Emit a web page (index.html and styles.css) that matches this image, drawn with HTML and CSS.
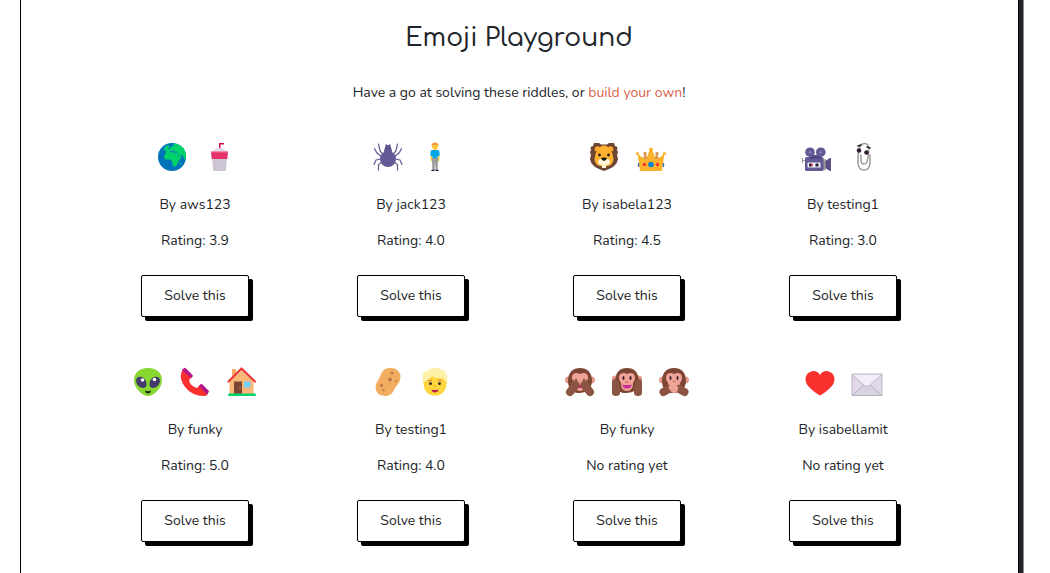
FILE: index.html
```html
<!DOCTYPE html>
<html lang="en">
<head>
<meta charset="utf-8">
<meta name="viewport" content="width=device-width, initial-scale=1">
<title>Emoji Playground</title>
<link rel="stylesheet" href="styles.css">
</head>
<body>
<main class="panel">
  <h1 class="title">Emoji Playground</h1>
  <p class="intro">Have a go at solving these riddles, or <a class="link" href="#build">build your own</a>!</p>
  <section class="grid">
    <article class="riddle">
      <div class="emojis">
        <svg class="emoji" viewBox="0 0 32 32" role="img" aria-label="Globe"><circle cx="16" cy="16" r="14" fill="#0074ba"/><path d="M8 8 10 5l2.500-1 1 1.500L12 7.500l2 .5 1-2.500 3-.5-1-2 2-.5 4.500 1.500L28 7.500l2 5v4.500l-1.500 2-1-3-1.500-2h-1.500l1 2.500-1.500 2-1 .5-1 3-2 3-1.500 1-1.500-1.500-1-3.500-.5-1.500-2-1H10l-2-1.500v-2l2-2.500-.5-1.500 1.500-1-1.500-.5L8 9.500z" fill="#00d26a"/><path d="M13 11.500q2-1 4 .3l4.500.2-.5-1.200-2.500-.3-1-1.300-1.500.5-1-.5zM21 13l2 3 .6-.3-1.600-3z" fill="#0d8fb5"/><path d="m24 21.400 1-.6-.4 2.600-.9.5z" fill="#00d26a"/></svg>
        <svg class="emoji" viewBox="0 0 32 32" role="img" aria-label="Cup with straw"><path d="M16 9V2h5v1.500h-3.500V9z" fill="#ca0b4a"/><path d="M12 8.500Q12 7 13.500 7h6Q21 7 21 8.500L24 10v1H9v-1z" fill="#e1d8ec"/><path d="m9 15 1 14q.1 1 1 1h11q.9 0 1-1l1-14z" fill="#cdc4d6"/><path d="M8 10.800h17l-.7 7.200H8.700z" fill="#e63169"/><path d="M8 10h17v1.300H8z" fill="#f38daa"/></svg>
      </div>
      <p class="meta">By aws123</p><p class="meta">Rating: 3.9</p><button class="solve" type="button">Solve this</button>
    </article>
    <article class="riddle">
      <div class="emojis">
        <svg class="emoji" viewBox="0 0 32 32" role="img" aria-label="Spider"><g fill="none" stroke="#635994" stroke-width="1.200" stroke-linecap="round"><path d="M11 13 8 10 6.500 3M9 15l-4-3-2.500-4.500M9 18l-5 1-2 4.500M10 21l-3.500 2.500L6.500 29M21 13l3-3 1.500-7M23 15l4-3 2.500-4.500M23 18l5 1 2 4.500M22 21l3.500 2.500L25.500 29"/></g><path d="M13 10 13.500 4q.8-2 1.300 0h2.400q.5-2 1.300 0l.5 6z" fill="#635994"/><ellipse cx="16" cy="10" rx="4" ry="4.500" fill="#635994"/><circle cx="16" cy="18" r="8" fill="#635994"/><path d="M14.200 5.500v2M17.800 5.500v2" stroke="#433b6b" stroke-width="1"/></svg>
        <svg class="emoji" viewBox="0 0 32 32" role="img" aria-label="Person standing"><path d="M11.700 13v6.500q1.300 1.500 2 0V13zM18.300 13v6.500q1.300 1.500 2 0V13zM14.500 7h3v3h-3z" fill="#f9c23c"/><circle cx="16" cy="5.500" r="3" fill="#ffc83d"/><path d="M12.600 5q-.3-3.500 3.400-3.500T19.400 5q-1.400-1.500-3.400-1t-3.400 1" fill="#f19a3e"/><path d="M11.500 11q0-2 2-2h5q2 0 2 2v4h-2v3h-5v-3h-2z" fill="#00a6ed"/><path d="M13 17h6l-.3 12h-2.200L16 20l-.5 9h-2.200z" fill="#9b9b9b"/><path d="M12 30q.2-1.500 3.500-1.500V30zM20 30q-.2-1.500-3.500-1.500V30z" fill="#321b41"/></svg>
      </div>
      <p class="meta">By jack123</p><p class="meta">Rating: 4.0</p><button class="solve" type="button">Solve this</button>
    </article>
    <article class="riddle">
      <div class="emojis">
        <svg class="emoji" viewBox="0 0 32 32" role="img" aria-label="Lion"><path d="M6 2h5l2 1.500h6L21 2h5l1 3 2.500 1-.5 3 1 2-1 3 1 4-1.500 4.500L25 26l-4 2-5 2-5-2-4-2-3.500-3.500L2 18l1-4-1-3 1-2-.5-3L5 5z" fill="#6d4534"/><circle cx="9.500" cy="8" r="2.800" fill="#f9aa29"/><circle cx="22.500" cy="8" r="2.800" fill="#f9aa29"/><path d="M16 4.500q4 0 6.500 4.500 3 4 3 9 0 7.500-9.500 7.500T6.500 18q0-5 3-9Q12 4.500 16 4.500" fill="#ffb02e"/><ellipse cx="13.500" cy="21" rx="3.500" ry="3" fill="#fff3d8"/><ellipse cx="18.500" cy="21" rx="3.500" ry="3" fill="#fff3d8"/><path d="M14 23h4v4h-4z" fill="#fff3d8"/><circle cx="11.500" cy="14" r="1.400" fill="#212121"/><circle cx="20.500" cy="14" r="1.400" fill="#212121"/><path d="M13 17q3-1.200 6 0-1 2.500-3 3-2-.5-3-3" fill="#111"/></svg>
        <svg class="emoji" viewBox="0 0 32 32" role="img" aria-label="Crown"><path d="m2.500 12 4 4 3 1 3-2 2.500-7h2l2.500 7 3 2 3-1 4-4-2.500 18H5z" fill="#fcb22b"/><g fill="#d99658"><circle cx="10" cy="12.500" r="1.700"/><circle cx="22" cy="12.500" r="1.700"/><path d="M9.300 13h1.500l1.700 5h-4zM21.200 13h1.500l.8 5h-4z"/></g><circle cx="2.500" cy="12.500" r="1.500" fill="#ffb02e"/><circle cx="29.500" cy="12.500" r="1.500" fill="#ffb02e"/><circle cx="16" cy="8.500" r="2" fill="#ffb02e"/><path d="M3.700 22v4q-1.200-2 0-4M28.300 22v4q1.200-2 0-4" stroke="#26a" stroke-width=".8" fill="#00a6ed"/><circle cx="16" cy="23.500" r="2.800" fill="#0084ce"/><circle cx="9.500" cy="23.500" r="1.700" fill="#f8312f"/><circle cx="22.500" cy="23.500" r="1.700" fill="#f8312f"/></svg>
      </div>
      <p class="meta">By isabela123</p><p class="meta">Rating: 4.5</p><button class="solve" type="button">Solve this</button>
    </article>
    <article class="riddle">
      <div class="emojis emojis-trailing">
        <svg class="emoji" viewBox="0 0 32 32" role="img" aria-label="Movie camera"><path d="M1.500 17v5M2 19.500h3" stroke="#9b9b9b" stroke-width="1.200"/><path d="M24 20 29 17h1v13h-1l-5-3z" fill="#5b4d85"/><path d="M21.500 18h3v11h-3z" fill="#9b9b9b"/><rect x="4" y="16" width="18.500" height="14" rx="1.500" fill="#635994"/><path d="m9 13 5 1 6-1v5H9z" fill="#534783"/><circle cx="9" cy="11.200" r="4.800" fill="#635994"/><circle cx="19.800" cy="11.200" r="4.800" fill="#635994"/><circle cx="9" cy="11.200" r="1" fill="#a59bc5"/><circle cx="19.800" cy="11.200" r="1" fill="#a59bc5"/><rect x="6.500" y="21.500" width="13" height="5" rx=".5" fill="#f4f4f4"/><path d="M8 22.500h3v3H8z" fill="#321b41"/><circle cx="11" cy="24" r="1" fill="#f8312f"/><path d="M14.500 22.500h3v3h-3z" fill="#321b41"/></svg>
        <svg class="emoji" viewBox="0 0 32 32" role="img" aria-label="Paperclip with eyes"><path d="M20 4Q18 1.500 14.500 3 12 4 11 8l-1 8v6q.5 7 6 7t6-7v-8M20 4q1.500 3 .5 8l-1 7q-.5 4-3.500 4t-3-4v-5" fill="none" stroke="#9b9b9b" stroke-width="1.500" stroke-linecap="round"/><circle cx="11" cy="9.500" r="2.300" fill="#321b31"/><circle cx="18.500" cy="11.500" r="2.300" fill="#321b31"/><path d="m10 5 3-1M19 6l3 1" stroke="#212121" stroke-width="1.500" stroke-linecap="round"/></svg>
      </div>
      <p class="meta">By testing1</p><p class="meta">Rating: 3.0</p><button class="solve" type="button">Solve this</button>
    </article>
    <article class="riddle">
      <div class="emojis">
        <svg class="emoji" viewBox="0 0 32 32" role="img" aria-label="Alien"><path d="M16 2c9 0 14 5.500 14 12 0 8-8 16-14 16S2 22 2 14C2 7.500 7 2 16 2" fill="#86d72f"/><path d="M6 11q5-1.500 8 4 2 7-3 7Q5 21 4 15q0-3 2-4M26 11q-5-1.500-8 4-2 7 3 7 6-1 7-7 0-3-2-4" fill="#433b6b"/><circle cx="10.500" cy="14" r="1.800" fill="#fff"/><circle cx="22.500" cy="13.500" r="1.800" fill="#fff"/><path d="M13 24.500q3 1.300 6 0-.5 3-3 3t-3-3" fill="#212121"/></svg>
        <svg class="emoji" viewBox="0 0 32 32" role="img" aria-label="Telephone receiver"><path d="m4 3 9 8-3 3q1 6 8 8l3-3 8 9q-1 2-4 2Q13 30 6 21 0 13 2.500 6z" fill="#f8312f"/><path d="m3 4 2-2q1-.5 2 .5L13.500 9q.8.800 0 1.800L12 12zM20 20l1.500-1.700q1-.8 2 .2l6 6q1 1 0 2L28 28.500z" fill="#b4168a"/></svg>
        <svg class="emoji" viewBox="0 0 32 32" role="img" aria-label="House"><path d="M3.500 15 16 4l11.500 11v13h-24z" fill="#f9b778"/><path d="M6 3h4v4L6 11z" fill="#f9aa64"/><path d="m2.500 15.500 13-13 13.500 13" fill="none" stroke="#e8383b" stroke-width="2.200" stroke-linecap="round" stroke-linejoin="round"/><path d="M8 15.500h8V28H8z" fill="#7d4533"/><circle cx="14" cy="22" r=".8" fill="#d3883e"/><rect x="18" y="15.500" width="6.500" height="6" rx=".5" fill="#77cfff"/><rect x="2" y="27.500" width="28" height="2.500" rx="1.200" fill="#00d26a"/></svg>
      </div>
      <p class="meta">By funky</p><p class="meta">Rating: 5.0</p><button class="solve" type="button">Solve this</button>
    </article>
    <article class="riddle">
      <div class="emojis">
        <svg class="emoji" viewBox="0 0 32 32" role="img" aria-label="Potato"><path d="M18 2q8-.5 10.500 7 .5 6-4 11-2 2-3 5-2.500 5-8.500 5Q4 29.500 3.500 21.500q0-4 3-8Q8 11 9.500 7 12 2 18 2" fill="#f3ad61"/><g fill="#bd7945"><circle cx="20" cy="7" r="1.500"/><circle cx="18" cy="13.500" r="1.900"/><circle cx="24" cy="15" r="1.100"/><circle cx="9.500" cy="19.500" r="1.700"/><circle cx="11.500" cy="24" r="1.200"/></g></svg>
        <svg class="emoji" viewBox="0 0 32 32" role="img" aria-label="Person with blond hair"><ellipse cx="16" cy="17" rx="12" ry="3" fill="#ffc928"/><circle cx="16" cy="18.500" r="11.300" fill="#ffd53e"/><path d="M4 16Q3 12 4 9 4 5 8 5.500 11 1.500 16 2q5 0 7 2 4 0 4 4 2 3 1 8h-1q-2-3-5-4-7 0-9-2-4 5-9 6" fill="#fff0a8"/><path d="M9 15q2-1.200 4-.3M19 14.700q2-.9 4 .3" fill="none" stroke="#d67d53" stroke-width="1"/><circle cx="11.500" cy="17.500" r="1.500" fill="#402a32"/><circle cx="20.500" cy="17.500" r="1.500" fill="#402a32"/><path d="M15 20h2" stroke="#e29b25" stroke-width="1.200"/><path d="M12.500 23.500q3.500 1 7 0-.5 3-3.500 3t-3.500-3" fill="#bb1d50"/></svg>
      </div>
      <p class="meta">By testing1</p><p class="meta">Rating: 4.0</p><button class="solve" type="button">Solve this</button>
    </article>
    <article class="riddle">
      <div class="emojis">
        <svg class="emoji" viewBox="0 0 32 32" role="img" aria-label="See-no-evil monkey"><circle cx="4.500" cy="14" r="3.500" fill="#e59a8c"/><circle cx="27.500" cy="14" r="3.500" fill="#e59a8c"/><path d="M16 2q11 0 12 12 0 12-12 13T4 14Q5 2 16 2" fill="#7d4533"/><path d="M16 8q5-2.500 7.500 1 2 4-1.500 8-1 8-6 8t-6-8q-3.500-4-1.500-8Q11 5.500 16 8" fill="#f0a499"/><path d="M14 19h4l1.500 3h-7z" fill="#ca2c78"/><path d="m6 26 5.500-7M26 26l-5.500-7" stroke="#8c5543" stroke-width="8" stroke-linecap="round"/><path d="m8.500 14.500 2 5M12 14v6M23.500 14.500l-2 5M20 14v6" stroke="#8c5543" stroke-width="2.500" stroke-linecap="round"/></svg>
        <svg class="emoji" viewBox="0 0 32 32" role="img" aria-label="Hear-no-evil monkey"><path d="M1 11q1-1.500 4-1.500v8H1zM31 11q-1-1.500-4-1.500v8h4z" fill="#e9998b"/><path d="M16 2q11 0 12 13 0 11-12 12T4 15Q5 2 16 2" fill="#7d4533"/><path d="M16 8q5-2.500 7.500 1 1.500 4-1.500 8 0 8-6 8t-6-8q-3-4-1.500-8Q11 5.500 16 8" fill="#f0a499"/><ellipse cx="12.500" cy="12" rx="1" ry="2" fill="#321b28"/><ellipse cx="19.500" cy="12" rx="1" ry="2" fill="#321b28"/><path d="M14 15.500h4V17h-4z" fill="#d6726f"/><path d="M11.500 18.500q4.500 1 9 0 0 4-4.500 4t-4.500-4" fill="#ca2c98"/><path d="M1 16q0-3 3-3 2 0 3.500 3L9 22v5q0 3-4 3t-4-3zM31 16q0-3-3-3-2 0-3.500 3L23 22v5q0 3 4 3t4-3z" fill="#8c5543"/></svg>
        <svg class="emoji" viewBox="0 0 32 32" role="img" aria-label="Speak-no-evil monkey"><circle cx="4.500" cy="14" r="3.500" fill="#e59a8c"/><circle cx="27.500" cy="14" r="3.500" fill="#e59a8c"/><path d="M16 2q11 0 12 12 0 12-12 13T4 14Q5 2 16 2" fill="#7d4533"/><path d="M16 8q5-2.500 7.500 1 1.500 4-1.500 8 0 6-6 6t-6-6q-3-4-1.500-8Q11 5.500 16 8" fill="#f0a499"/><ellipse cx="12.500" cy="12" rx="1" ry="2" fill="#321b28"/><ellipse cx="19.500" cy="12" rx="1" ry="2" fill="#321b28"/><path d="M14.500 15.500h3" stroke="#c76f67"/><path d="m5.500 26 5.500-3M26.500 26 21 23" stroke="#8c5543" stroke-width="8" stroke-linecap="round"/><path d="m12 18 3 1 3-2 1 1-.5 2 2 1-1 4-3.500 2.500-3-2-2.500-4z" fill="#f0a499"/></svg>
      </div>
      <p class="meta">By funky</p><p class="meta">No rating yet</p><button class="solve" type="button">Solve this</button>
    </article>
    <article class="riddle">
      <div class="emojis">
        <svg class="emoji" viewBox="0 0 32 32" role="img" aria-label="Heart"><path d="M9 5q5 0 7 4 2-4 7-4 7 1 7.500 8 0 5-4.500 9-4 4-9 7-1 .6-2 0-5-3-9-7-4.500-4-4.500-9Q2 6 9 5" fill="#f8312f"/></svg>
        <svg class="emoji" viewBox="0 0 32 32" role="img" aria-label="Envelope"><path d="M1 8h30v21.500H1z" fill="#e1d8ec"/><path d="M1 29.500 13 18h6l12 11.500z" fill="#d9d2e3"/><path d="m1.500 8.500 12 11q2.500 2 5 0l12-11z" fill="#f3eef8"/><path d="m1.500 9 12 10.500q2.500 2 5 0L30.500 9M1.500 29 13 19M30.500 29 19 19" fill="none" stroke="#b4acbc" stroke-width=".8"/><path d="M1 8h30v21.500H1z" fill="none" stroke="#aaa8b3" stroke-width=".8"/></svg>
      </div>
      <p class="meta">By isabellamit</p><p class="meta">No rating yet</p><button class="solve" type="button">Solve this</button>
    </article>
  </section>
</main>
</body>
</html>
```
FILE: styles.css
```css
* { box-sizing: border-box; }
body {
  margin: 0;
  background: #fff;
  color: #212529;
  font-family: Nunito, "Open Sans", "Liberation Sans", sans-serif;
  font-size: 14px;
  font-weight: 400;
  line-height: 20px;
}
.panel {
  min-height: 100vh;
  margin: 0 31px 0 20px;
  padding: 21px 25px 24px 24px;
  border: solid #000;
  border-width: 0 1px;
  box-shadow: 4px 0 0 #212529, 5px 0 0 #8c8e91;
  text-align: center;
}
.title {
  margin: 0;
  font-family: Comfortaa, Lato, sans-serif;
  font-size: 25px;
  font-weight: 500;
  line-height: 34px;
}
.intro { margin: 28px 0 38px; }
.link { color: #d9644a; text-decoration: none; }
.grid {
  display: grid;
  grid-template-columns: repeat(4, 1fr);
  row-gap: 49px;
  max-width: 864px;
  margin: 0 auto;
}
.riddle {
  display: flex;
  flex-direction: column;
  align-items: center;
}
.emojis { display: flex; gap: 15px; margin-bottom: 22px; }
.emojis-trailing { padding-right: 6px; }
.emoji { width: 32px; height: 32px; }
.meta { margin: 0 0 16px; }
.solve {
  margin-top: 8px;
  padding: 10px 22px;
  border: 1px solid #000;
  border-radius: 2px;
  background: #fff;
  box-shadow: 4px 4px 0 #000;
  color: inherit;
  font: inherit;
}
```
